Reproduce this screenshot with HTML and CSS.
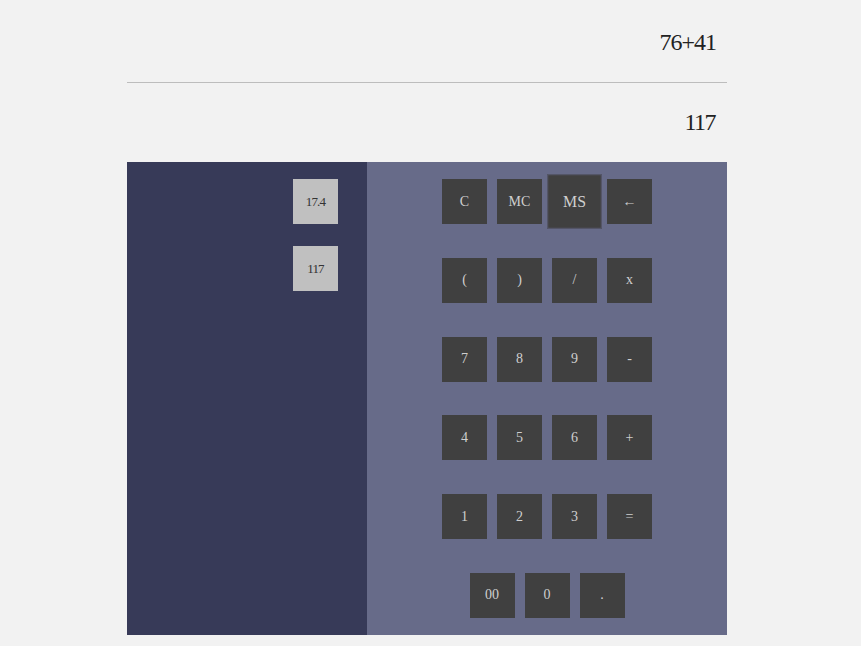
FILE: index.html
```html
<!DOCTYPE html>
<html>
<head>
<meta charset="utf-8">
<link rel="stylesheet" href="styles.css">
</head>
<body>
<div class="calc">
  <div class="expr">76+41</div>
  <div class="result">117</div>
  <div class="panel">
    <div class="memory">
      <div class="mem">17.4</div>
      <div class="mem">117</div>
    </div>
    <div class="keys">
      <div class="row"><div class="key">C</div><div class="key">MC</div><div class="key hover">MS</div><div class="key">←</div></div>
      <div class="row"><div class="key">(</div><div class="key">)</div><div class="key">/</div><div class="key">x</div></div>
      <div class="row"><div class="key">7</div><div class="key">8</div><div class="key">9</div><div class="key">-</div></div>
      <div class="row"><div class="key">4</div><div class="key">5</div><div class="key">6</div><div class="key">+</div></div>
      <div class="row"><div class="key">1</div><div class="key">2</div><div class="key">3</div><div class="key">=</div></div>
      <div class="row"><div class="key">00</div><div class="key">0</div><div class="key">.</div></div>
    </div>
  </div>
</div>
</body>
</html>
```
FILE: styles.css
```css
html, body {
  margin: 0;
  padding: 0;
  background: #f2f2f2;
}
body {
  font-family: "Liberation Serif", "DejaVu Serif", serif;
}
.calc {
  width: 600px;
  margin-left: 127px;
}
.expr {
  height: 83px;
  border-bottom: 1px solid #bdbdbd;
  text-align: right;
  padding-right: 11px;
  font-size: 24px;
  letter-spacing: -1px;
  line-height: 84px;
  color: #222;
  box-sizing: border-box;
}
.result {
  height: 79px;
  text-align: right;
  padding-right: 12px;
  font-size: 24px;
  letter-spacing: -1.5px;
  line-height: 78px;
  color: #222;
}
.panel {
  display: flex;
  height: 473px;
}
.memory {
  width: 240px;
  background: #373a58;
  display: flex;
  flex-direction: column;
  align-items: flex-end;
  padding: 17px 29px 0 0;
  box-sizing: border-box;
  gap: 22px;
}
.mem {
  width: 45px;
  height: 45px;
  background: #c0c0c0;
  color: #333;
  font-size: 13px;
  letter-spacing: -0.8px;
  display: flex;
  align-items: center;
  justify-content: center;
}
.keys {
  width: 360px;
  background: #676b89;
  display: flex;
  flex-direction: column;
  padding: 17px 0;
  box-sizing: border-box;
  gap: 33.8px;
}
.row {
  display: flex;
  justify-content: center;
  gap: 10px;
}
.key {
  width: 45px;
  height: 45px;
  background: #404040;
  color: #cfcfcf;
  font-size: 14px;
  display: flex;
  align-items: center;
  justify-content: center;
  box-sizing: border-box;
}
.key.hover {
  transform: scale(1.22);
  border: 1px solid #55576a;
  font-size: 13px;
}
```
